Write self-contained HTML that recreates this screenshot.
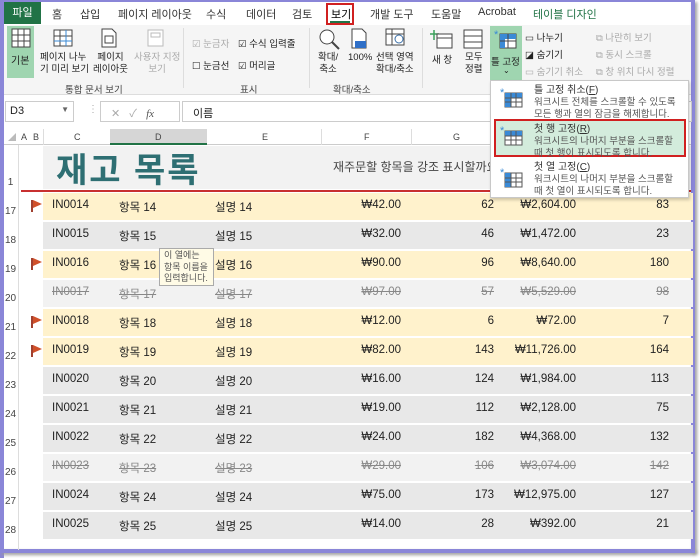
<!DOCTYPE html>
<html><head><meta charset="utf-8">
<style>
*{margin:0;padding:0;box-sizing:border-box}
body{width:700px;height:558px;background:#fff;position:relative;overflow:hidden;font-family:"Liberation Sans","Noto Sans CJK KR",sans-serif;color:#222}
.a{position:absolute;white-space:nowrap}
.tab{position:absolute;top:6px;font-size:11px;color:#333}
.rl{font-size:9px;color:#444}
.row{position:absolute;left:43px;width:650px;height:27px;font-size:11.5px}
.row span{position:absolute;top:6px}
.y{background:#fff2cc}.g{background:#e8e8e8}.s{background:#f2f2f2;color:#888}
.s span{text-decoration:line-through}
.rn{position:absolute;left:3px;width:15px;font-size:10px;color:#444;text-align:center}
.flag{position:absolute;left:31px;width:2px;height:12px;background:#a04030}
.flag:after{content:"";position:absolute;left:2px;top:0;border-left:9px solid #d0502a;border-top:4px solid transparent;border-bottom:4px solid transparent}
.mi{position:absolute;font-size:10px;line-height:12px;color:#333}
.md{color:#555;font-size:9.5px;line-height:12px}
</style></head><body>
<div class="a" style="left:0;top:0;width:4px;height:558px;background:#8a86d8"></div>
<div class="a" style="left:691px;top:0;width:4px;height:552px;background:#8a86d8;box-shadow:2px 2px 3px #999"></div>
<div class="a" style="left:0;top:549px;width:695px;height:4px;background:#8a86d8;box-shadow:2px 2px 3px #999"></div>
<div class="a" style="left:0;top:0;width:695px;height:2px;background:#8a86d8"></div>

<div class="a" style="left:4px;top:2px;width:37px;height:22px;background:#217346;color:#fff;font-size:11px;text-align:center;line-height:22px">파일</div>
<div class="tab" style="left:52px">홈</div>
<div class="tab" style="left:80px">삽입</div>
<div class="tab" style="left:118px">페이지 레이아웃</div>
<div class="tab" style="left:206px">수식</div>
<div class="tab" style="left:246px">데이터</div>
<div class="tab" style="left:292px">검토</div>
<div class="a" style="left:326px;top:3px;width:28px;height:22px;border:2px solid #d02020"></div>
<div class="tab" style="left:331px;color:#000">보기</div>
<div class="a" style="left:330px;top:21px;width:20px;height:2px;background:#217346"></div>
<div class="tab" style="left:370px">개발 도구</div>
<div class="tab" style="left:431px">도움말</div>
<div class="tab" style="left:478px">Acrobat</div>
<div class="tab" style="left:533px;color:#217346">테이블 디자인</div>

<div class="a" style="left:4px;top:25px;width:687px;height:70px;background:#f5f5f5;border-bottom:1px solid #ddd"></div>
<div class="a" style="left:7px;top:26px;width:27px;height:52px;background:#9fd5b0"></div>
<svg class="a" style="left:11px;top:28px" width="20" height="20"><rect x="1" y="1" width="18" height="18" fill="#fff" stroke="#444"/><path d="M7 1v18M13 1v18M1 7h18M1 13h18" stroke="#444"/></svg>
<div class="a" style="left:11px;top:52px;font-size:10px">기본</div>
<svg class="a" style="left:53px;top:29px" width="20" height="18"><rect x="1" y="1" width="18" height="16" fill="#fff" stroke="#444"/><path d="M7 1v16M1 7h18" stroke="#444"/><path d="M13 1v16M1 12h18" stroke="#3a8ad6"/></svg>
<div class="a" style="left:40px;top:52px;font-size:9.5px;line-height:12px">페이지 나누<br>기 미리 보기</div>
<svg class="a" style="left:101px;top:28px" width="16" height="20"><path d="M1 1h10l4 4v14H1z" fill="#fff" stroke="#444"/><rect x="4" y="8" width="8" height="7" fill="none" stroke="#444"/></svg>
<div class="a" style="left:93px;top:52px;font-size:9.5px;line-height:12px;text-align:center">페이지<br>레이아웃</div>
<svg class="a" style="left:145px;top:28px" width="20" height="20"><rect x="3" y="2" width="15" height="16" fill="#fff" stroke="#bbb"/><rect x="6" y="5" width="9" height="4" fill="none" stroke="#bbb"/></svg>
<div class="a" style="left:134px;top:52px;font-size:9.5px;line-height:12px;color:#aaa;text-align:center">사용자 지정<br>보기</div>
<div class="a" style="left:65px;top:82px;font-size:9.5px;color:#444">통합 문서 보기</div>
<div class="a" style="left:183px;top:28px;width:1px;height:60px;background:#ddd"></div>
<div class="a" style="left:192px;top:36px;font-size:9.5px;color:#aaa">☑ 눈금자</div>
<div class="a" style="left:238px;top:36px;font-size:9.5px">☑ 수식 입력줄</div>
<div class="a" style="left:192px;top:58px;font-size:9.5px">☐ 눈금선</div>
<div class="a" style="left:238px;top:58px;font-size:9.5px">☑ 머리글</div>
<div class="a" style="left:240px;top:82px;font-size:9.5px;color:#444">표시</div>
<div class="a" style="left:309px;top:28px;width:1px;height:60px;background:#ddd"></div>
<svg class="a" style="left:318px;top:28px" width="22" height="22"><circle cx="9" cy="9" r="7" fill="#fff" stroke="#444"/><path d="M14 14l7 7" stroke="#444" stroke-width="2"/></svg>
<div class="a" style="left:318px;top:52px;font-size:9.5px;line-height:12px;text-align:center">확대/<br>축소</div>
<svg class="a" style="left:351px;top:28px" width="18" height="22"><path d="M1 1h10l4 4v15H1z" fill="#fff" stroke="#444"/><rect x="4" y="13" width="11" height="7" fill="#2f6fc7"/></svg>
<div class="a" style="left:348px;top:52px;font-size:9.5px">100%</div>
<svg class="a" style="left:385px;top:28px" width="22" height="20"><rect x="1" y="1" width="18" height="16" fill="#fff" stroke="#444"/><path d="M1 6h18M7 1v16" stroke="#444"/><circle cx="14" cy="11" r="4" fill="#fff" stroke="#3a6fa8"/></svg>
<div class="a" style="left:376px;top:52px;font-size:9.5px;line-height:12px;text-align:center">선택 영역<br>확대/축소</div>
<div class="a" style="left:333px;top:82px;font-size:9.5px;color:#444">확대/축소</div>
<div class="a" style="left:422px;top:28px;width:1px;height:60px;background:#ddd"></div>
<svg class="a" style="left:430px;top:28px" width="24" height="22"><path d="M4 2v10M0 6h9" stroke="#3aa05a" stroke-width="1.5"/><rect x="7" y="6" width="15" height="14" fill="#fff" stroke="#444"/><path d="M7 10h15" stroke="#444"/></svg>
<div class="a" style="left:432px;top:52px;font-size:9.5px">새 창</div>
<svg class="a" style="left:463px;top:28px" width="20" height="22"><rect x="1" y="2" width="18" height="18" fill="#fff" stroke="#444"/><path d="M1 8h18M1 14h18" stroke="#444"/></svg>
<div class="a" style="left:465px;top:52px;font-size:9.5px;line-height:12px;text-align:center">모두<br>정렬</div>
<div class="a" style="left:490px;top:26px;width:32px;height:54px;background:#9fd5b0"></div>
<svg class="a" style="left:494px;top:28px" width="24" height="22"><rect x="6" y="6" width="16" height="14" fill="#fff" stroke="#444"/><rect x="6" y="6" width="16" height="5" fill="#3a8ad6"/><rect x="6" y="6" width="5" height="14" fill="#3a8ad6"/><path d="M14 6v14M6 13h16" stroke="#444"/><text x="0" y="10" font-size="11" fill="#3a8ad6">*</text></svg>
<div class="a" style="left:491px;top:54px;font-size:9.5px">틀 고정</div>
<div class="a" style="left:503px;top:66px;font-size:8px">⌄</div>
<div class="a" style="left:525px;top:30px;font-size:9.5px">▭ 나누기</div>
<div class="a" style="left:525px;top:47px;font-size:9.5px">◪ 숨기기</div>
<div class="a" style="left:525px;top:64px;font-size:9.5px;color:#aaa">▭ 숨기기 취소</div>
<div class="a" style="left:596px;top:30px;font-size:9.5px;color:#aaa">⧉ 나란히 보기</div>
<div class="a" style="left:596px;top:47px;font-size:9.5px;color:#aaa">⧉ 동시 스크롤</div>
<div class="a" style="left:596px;top:64px;font-size:9.5px;color:#aaa">⧉ 창 위치 다시 정렬</div>

<div class="a" style="left:4px;top:95px;width:687px;height:33px;background:#fff"></div>
<div class="a" style="left:5px;top:101px;width:69px;height:21px;border:1px solid #ccc;font-size:11px;padding:3px 4px">D3<span style="position:absolute;right:4px;top:3px;font-size:8px;color:#666">▼</span></div>
<div class="a" style="left:88px;top:104px;font-size:10px;color:#aaa">⋮</div>
<div class="a" style="left:100px;top:101px;width:80px;height:21px;border:1px solid #ccc;font-size:11px;color:#aaa;padding:3px 10px">✕&nbsp;&nbsp;&nbsp;✓&nbsp;&nbsp;&nbsp;<i style="color:#555;font-family:'Liberation Serif'">fx</i></div>
<div class="a" style="left:182px;top:101px;width:510px;height:21px;border:1px solid #ccc;font-size:11px;padding:3px 10px">이름</div>

<div class="a" style="left:4px;top:129px;width:687px;height:16px;background:#fff;border-bottom:1px solid #ccc"></div>
<div class="a" style="left:110px;top:129px;width:97px;height:16px;background:#d6d6d6;border-bottom:2px solid #217346"></div>
<div class="a" style="left:8px;top:133px;border-left:8px solid transparent;border-bottom:8px solid #bbb"></div>
<div class="a rl" style="left:21px;top:132px">A</div>
<div class="a rl" style="left:33px;top:132px">B</div>
<div class="a rl" style="left:74px;top:132px">C</div>
<div class="a rl" style="left:155px;top:132px">D</div>
<div class="a rl" style="left:262px;top:132px">E</div>
<div class="a rl" style="left:364px;top:132px">F</div>
<div class="a rl" style="left:453px;top:132px">G</div>
<div class="a" style="left:43px;top:129px;width:1px;height:16px;background:#ddd"></div>
<div class="a" style="left:321px;top:129px;width:1px;height:16px;background:#ddd"></div>
<div class="a" style="left:411px;top:129px;width:1px;height:16px;background:#ddd"></div>
<div class="a" style="left:18px;top:145px;width:1px;height:405px;background:#ddd"></div>

<div class="a" style="left:43px;top:146px;width:648px;height:43px;background:#f2f2f2"></div>
<div class="a" style="left:56px;top:143px;font-size:34px;font-weight:bold;color:#2e6f73;letter-spacing:2px">재고 목록</div>
<div class="a" style="left:333px;top:158px;font-size:12px;color:#444">재주문할 항목을 강조 표시할까요?</div>
<div class="rn" style="top:177px">1</div>
<div class="a" style="left:21px;top:190px;width:670px;height:2px;background:#c83030"></div>

<div class="row y" style="top:193px"><span style="left:9px">IN0014</span><span style="left:76px">항목 14</span><span style="left:172px">설명 14</span><span style="right:292px">₩42.00</span><span style="right:199px">62</span><span style="right:117px">₩2,604.00</span><span style="right:24px">83</span></div>
<div class="row g" style="top:222px"><span style="left:9px">IN0015</span><span style="left:76px">항목 15</span><span style="left:172px">설명 15</span><span style="right:292px">₩32.00</span><span style="right:199px">46</span><span style="right:117px">₩1,472.00</span><span style="right:24px">23</span></div>
<div class="row y" style="top:251px"><span style="left:9px">IN0016</span><span style="left:76px">항목 16</span><span style="left:172px">설명 16</span><span style="right:292px">₩90.00</span><span style="right:199px">96</span><span style="right:117px">₩8,640.00</span><span style="right:24px">180</span></div>
<div class="row s" style="top:280px"><span style="left:9px">IN0017</span><span style="left:76px">항목 17</span><span style="left:172px">설명 17</span><span style="right:292px">₩97.00</span><span style="right:199px">57</span><span style="right:117px">₩5,529.00</span><span style="right:24px">98</span></div>
<div class="row y" style="top:309px"><span style="left:9px">IN0018</span><span style="left:76px">항목 18</span><span style="left:172px">설명 18</span><span style="right:292px">₩12.00</span><span style="right:199px">6</span><span style="right:117px">₩72.00</span><span style="right:24px">7</span></div>
<div class="row y" style="top:338px"><span style="left:9px">IN0019</span><span style="left:76px">항목 19</span><span style="left:172px">설명 19</span><span style="right:292px">₩82.00</span><span style="right:199px">143</span><span style="right:117px">₩11,726.00</span><span style="right:24px">164</span></div>
<div class="row g" style="top:367px"><span style="left:9px">IN0020</span><span style="left:76px">항목 20</span><span style="left:172px">설명 20</span><span style="right:292px">₩16.00</span><span style="right:199px">124</span><span style="right:117px">₩1,984.00</span><span style="right:24px">113</span></div>
<div class="row g" style="top:396px"><span style="left:9px">IN0021</span><span style="left:76px">항목 21</span><span style="left:172px">설명 21</span><span style="right:292px">₩19.00</span><span style="right:199px">112</span><span style="right:117px">₩2,128.00</span><span style="right:24px">75</span></div>
<div class="row g" style="top:425px"><span style="left:9px">IN0022</span><span style="left:76px">항목 22</span><span style="left:172px">설명 22</span><span style="right:292px">₩24.00</span><span style="right:199px">182</span><span style="right:117px">₩4,368.00</span><span style="right:24px">132</span></div>
<div class="row s" style="top:454px"><span style="left:9px">IN0023</span><span style="left:76px">항목 23</span><span style="left:172px">설명 23</span><span style="right:292px">₩29.00</span><span style="right:199px">106</span><span style="right:117px">₩3,074.00</span><span style="right:24px">142</span></div>
<div class="row g" style="top:483px"><span style="left:9px">IN0024</span><span style="left:76px">항목 24</span><span style="left:172px">설명 24</span><span style="right:292px">₩75.00</span><span style="right:199px">173</span><span style="right:117px">₩12,975.00</span><span style="right:24px">127</span></div>
<div class="row g" style="top:512px"><span style="left:9px">IN0025</span><span style="left:76px">항목 25</span><span style="left:172px">설명 25</span><span style="right:292px">₩14.00</span><span style="right:199px">28</span><span style="right:117px">₩392.00</span><span style="right:24px">21</span></div>

<div class="flag" style="top:200px"></div>
<div class="flag" style="top:258px"></div>
<div class="flag" style="top:316px"></div>
<div class="flag" style="top:345px"></div>

<div class="rn" style="top:206px">17</div><div class="rn" style="top:235px">18</div><div class="rn" style="top:264px">19</div><div class="rn" style="top:293px">20</div><div class="rn" style="top:322px">21</div><div class="rn" style="top:351px">22</div><div class="rn" style="top:380px">23</div><div class="rn" style="top:409px">24</div><div class="rn" style="top:438px">25</div><div class="rn" style="top:467px">26</div><div class="rn" style="top:496px">27</div><div class="rn" style="top:525px">28</div>

<div class="a" style="left:159px;top:248px;width:55px;height:38px;background:#fffbe6;border:1px solid #aaa;font-size:9px;line-height:11.5px;color:#555;padding:1px 4px">이 열에는<br>항목 이름을<br>입력합니다.</div>

<div class="a" style="left:490px;top:80px;width:199px;height:118px;background:#fff;border:1px solid #c8c8c8;box-shadow:1px 2px 3px rgba(0,0,0,.2)"></div>
<div class="a" style="left:494px;top:119px;width:192px;height:38px;background:#d3ecdc;border:2px solid #d02020"></div>
<svg class="a" style="left:500px;top:87px" width="24" height="22"><rect x="5" y="6" width="17" height="14" fill="#fff" stroke="#555"/><rect x="5" y="6" width="17" height="5" fill="#3a8ad6"/><rect x="5" y="6" width="6" height="14" fill="#3a8ad6"/><path d="M11 6v14M16 6v14M5 11h17M5 15h17" stroke="#555"/><text x="0" y="9" font-size="11" fill="#3a8ad6">*</text></svg>
<svg class="a" style="left:500px;top:125px" width="24" height="22"><rect x="5" y="6" width="17" height="14" fill="#fff" stroke="#555"/><rect x="5" y="6" width="17" height="5" fill="#3a8ad6"/><path d="M11 6v14M16 6v14M5 11h17M5 15h17" stroke="#555"/><text x="0" y="9" font-size="11" fill="#3a8ad6">*</text></svg>
<svg class="a" style="left:500px;top:167px" width="24" height="22"><rect x="5" y="6" width="17" height="14" fill="#fff" stroke="#555"/><rect x="5" y="6" width="6" height="14" fill="#3a8ad6"/><path d="M11 6v14M16 6v14M5 11h17M5 15h17" stroke="#555"/><text x="0" y="9" font-size="11" fill="#3a8ad6">*</text></svg>
<div class="mi" style="left:534px;top:85px">틀 고정 취소(<u>F</u>)<div class="md">워크시트 전체를 스크롤할 수 있도록<br>모든 행과 열의 잠금을 해제합니다.</div></div>
<div class="mi" style="left:534px;top:124px">첫 행 고정(<u>R</u>)<div class="md">워크시트의 나머지 부분을 스크롤할<br>때 첫 행이 표시되도록 합니다.</div></div>
<div class="mi" style="left:534px;top:162px">첫 열 고정(<u>C</u>)<div class="md">워크시트의 나머지 부분을 스크롤할<br>때 첫 열이 표시되도록 합니다.</div></div>
</body></html>
